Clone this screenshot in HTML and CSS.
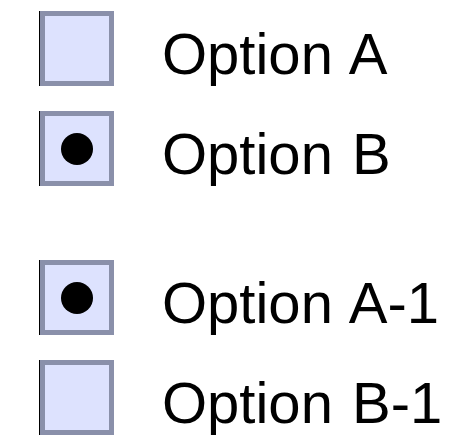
FILE: index.html
```html
<!DOCTYPE html>
<html>
<head>
<meta charset="utf-8">
<link rel="stylesheet" href="styles.css">
</head>
<body>
<div class="list">
  <div class="group">
    <div class="row"><span class="box"></span><span class="label">Option A</span></div>
    <div class="row"><span class="box checked"></span><span class="label">Option B</span></div>
  </div>
  <div class="group">
    <div class="row"><span class="box checked"></span><span class="label">Option A-1</span></div>
    <div class="row"><span class="box"></span><span class="label">Option B-1</span></div>
  </div>
</div>
</body>
</html>
```
FILE: styles.css
```css
html, body {
  margin: 0;
  padding: 0;
  background: #ffffff;
}
.list {
  display: flex;
  flex-direction: column;
  gap: 49px;
  padding-top: 10px;
  font-family: "Liberation Sans", Arial, sans-serif;
}
.group {
  display: flex;
  flex-direction: column;
}
.row {
  height: 100px;
  display: flex;
  align-items: flex-start;
}
.box {
  box-sizing: border-box;
  width: 74px;
  height: 75px;
  margin: 1px 0 0 40px;
  border: 5px solid #8a90aa;
  background: #dde2fe;
  box-shadow: -1px 0 0 #000;
  display: flex;
  align-items: center;
  justify-content: center;
}
.box.checked::after {
  content: "";
  width: 32px;
  height: 32px;
  border-radius: 50%;
  background: #000;
}
.label {
  margin: 15px 0 0 48px;
  font-size: 58px;
  line-height: 58px;
  word-spacing: 3px;
  color: #000;
  white-space: nowrap;
}
```
